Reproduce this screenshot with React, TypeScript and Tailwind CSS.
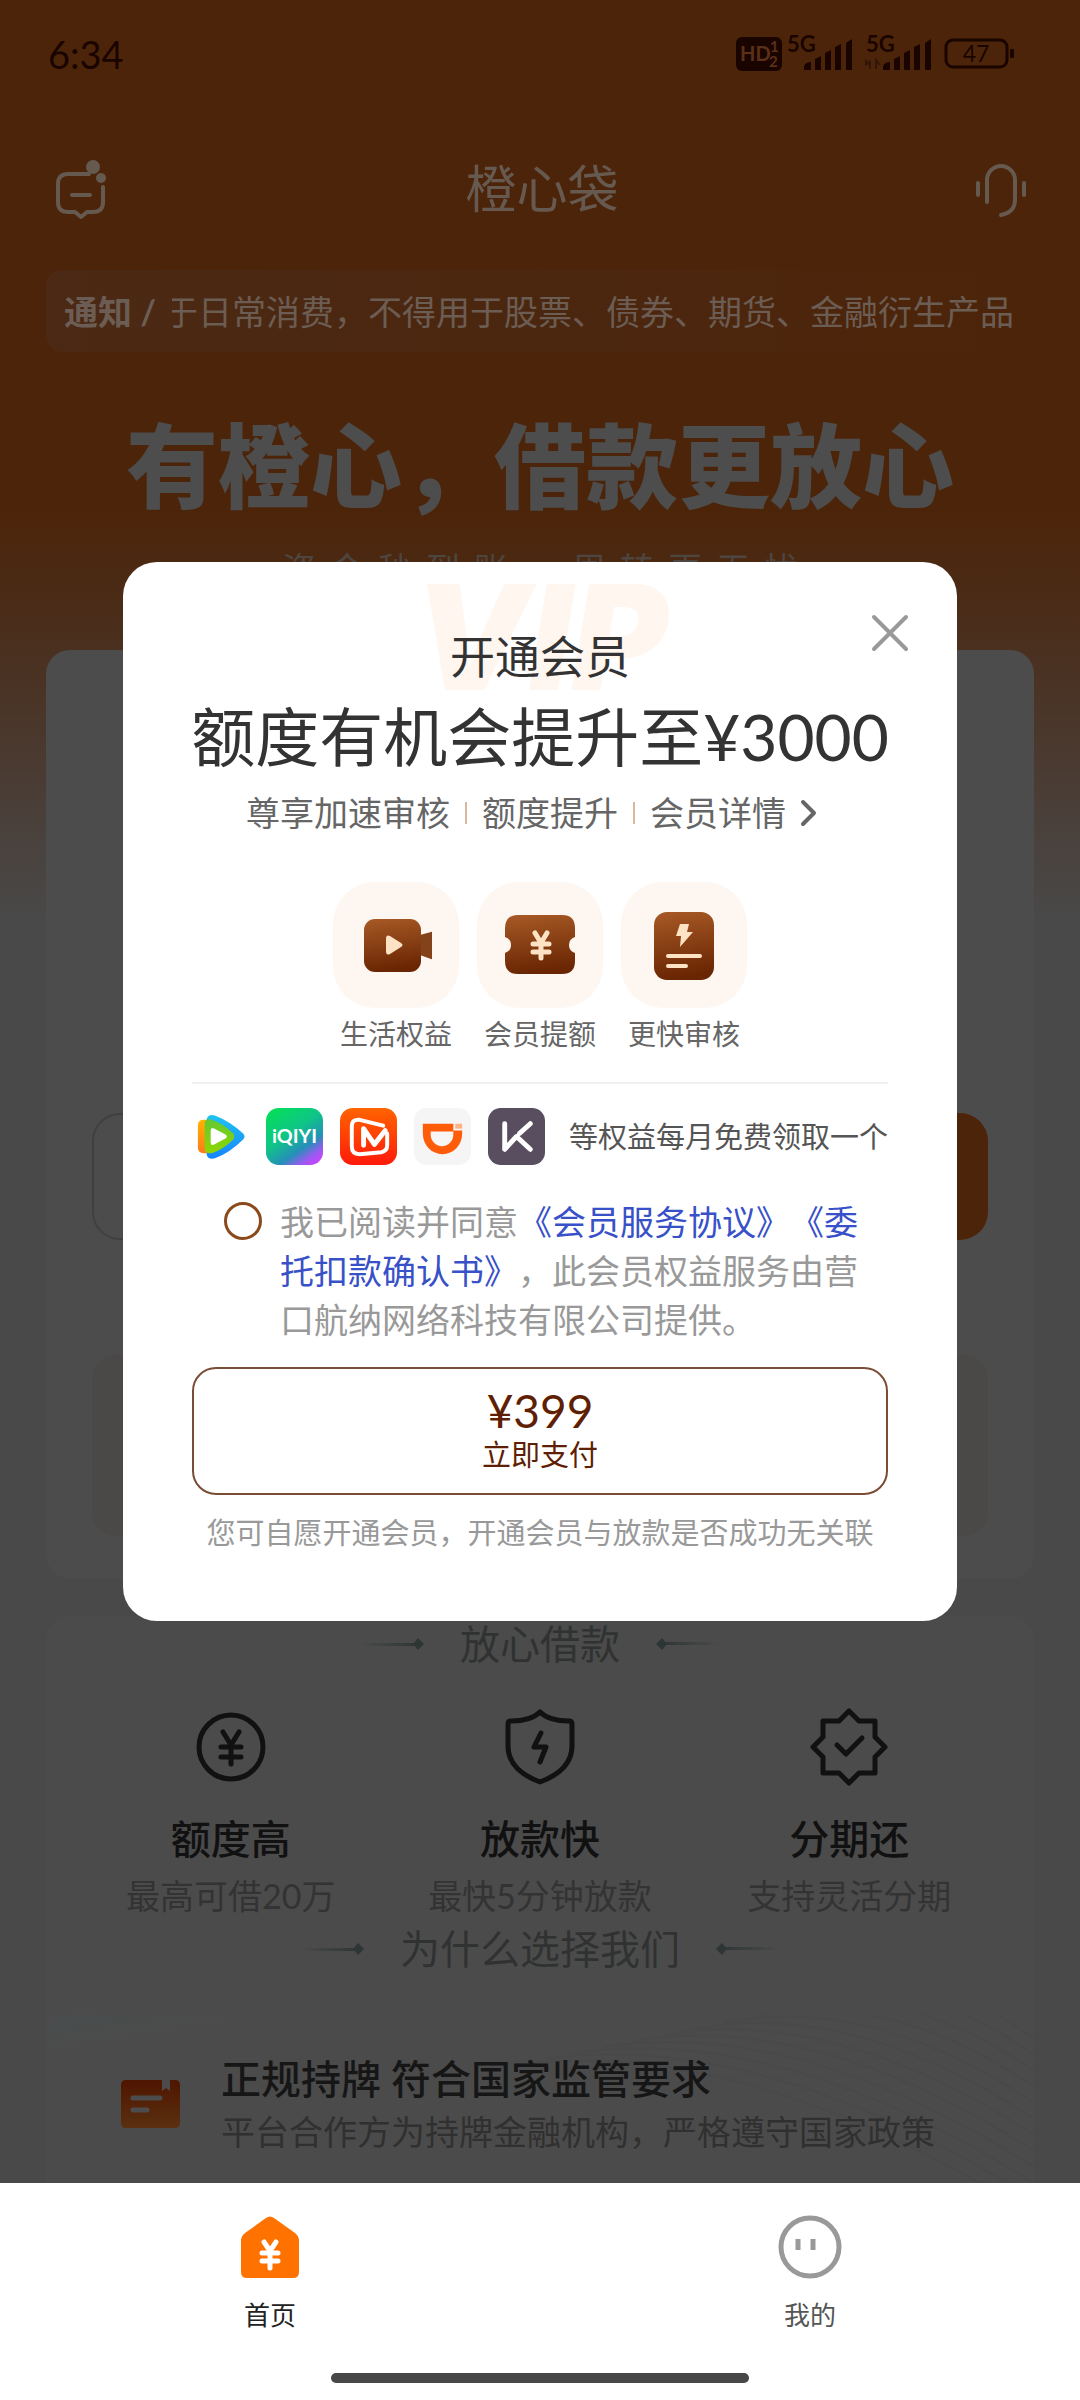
import type { ReactNode } from 'react';

const slogan = ['资金秒到账', '周转更无忧'];

const features = [
  { title: '额度高', text: '最高可借20万', icon: <YenCircleIcon /> },
  { title: '放款快', text: '最快5分钟放款', icon: <ShieldIcon /> },
  { title: '分期还', text: '支持灵活分期', icon: <BadgeIcon /> },
];

const benefits = [
  { label: '生活权益', icon: <CameraIcon /> },
  { label: '会员提额', icon: <CouponIcon /> },
  { label: '更快审核', icon: <FastReviewIcon /> },
];

/* Status bar */
function StatusIcons() {
  return (
    <svg width="280" height="44" viewBox="0 -4 280 44" fill="#1a0400" fontFamily="Lato, sans-serif" aria-hidden="true">
      <rect x="0" y="1" width="46" height="34" rx="6" />
      <text x="4" y="25" fontSize="20" fontWeight="700" fill="#5a3018">HD</text>
      <text x="34" y="16" fontSize="15" fontWeight="700" fill="#5a3018">1</text>
      <text x="33" y="31" fontSize="15" fontWeight="700" fill="#5a3018">2</text>
      {[0, 79].map((x) => (
        <g key={x} transform={`translate(${x} 0)`}>
          <text x="51" y="16" fontSize="22" fontWeight="700">5G</text>
          <path d="M68 34v-4q2-4 7-4v8zM79 34V23l6-3v14zM89 34V17l6-3v20zM99 34V11l6-3v26zM110 34V7l6-4v31z" />
        </g>
      ))}
      <path d="M130 30v-5l4 4M134 24v9M140 33v-9l4 5" fill="none" stroke="#33160a" strokeWidth="2" />
      <rect x="210" y="4" width="61" height="27" rx="7" fill="none" stroke="#1a0400" strokeWidth="3" />
      <rect x="274" y="13" width="4" height="9" rx="1" />
      <text x="240" y="26" fontSize="23" textAnchor="middle">47</text>
    </svg>
  );
}

function MessageIcon() {
  return (
    <svg width="56" height="62" viewBox="0 0 56 62" fill="none" stroke="#665950" strokeWidth="4" strokeLinecap="round" strokeLinejoin="round" aria-hidden="true">
      <path d="M35 16H14Q4 16 4 26v18q0 10 10 10h7l6 5 6-5h6q10 0 10-10V29" />
      <path d="M18 37h18" />
      <circle cx="39" cy="9" r="7" fill="#665950" stroke="none" />
      <circle cx="47" cy="20" r="5" fill="#665950" stroke="none" />
    </svg>
  );
}

function HeadsetIcon() {
  return (
    <svg width="54" height="58" viewBox="0 0 54 58" fill="none" stroke="#665950" strokeWidth="4" strokeLinecap="round" aria-hidden="true">
      <path d="M13 42V20a14 14 0 0 1 28 0v20q0 12-14 15" />
      <path d="M4 23v12M50 23v12" />
    </svg>
  );
}

/* Feature icons */
function YenCircleIcon() {
  return (
    <svg width="80" height="80" viewBox="0 0 80 80" fill="none" stroke="#111" strokeWidth="5" strokeLinecap="round" aria-hidden="true">
      <circle cx="40" cy="40" r="32" />
      <path d="M32 25l8 13 8-13M30 40h20M30 50h20M40 38v19" />
    </svg>
  );
}

function ShieldIcon() {
  return (
    <svg width="80" height="80" viewBox="0 0 80 80" fill="none" stroke="#111" strokeWidth="5" strokeLinecap="round" strokeLinejoin="round" aria-hidden="true">
      <path d="M40 5q9 9 29 9 3 0 3 3v22q0 24-32 36Q8 63 8 39V17q0-3 3-3 20 0 29-9z" />
      <path d="M41 26l-7 14h12l-6 15" />
    </svg>
  );
}

function BadgeIcon() {
  return (
    <svg width="80" height="80" viewBox="0 0 80 80" fill="none" stroke="#111" strokeWidth="5" strokeLinecap="round" strokeLinejoin="round" aria-hidden="true">
      <path d="M40 4l10 10h16v16l10 10-10 10v16H50L40 76 30 66H14V50L4 40l10-10V14h16z" />
      <path d="M28 38l9 9 16-16" />
    </svg>
  );
}

function LicenceIcon() {
  return (
    <svg width="60" height="48" viewBox="0 0 60 48" aria-hidden="true">
      <defs>
        <linearGradient id="licence" x1="0" y1="0" x2="0" y2="1">
          <stop offset="0" stopColor="#4f1500" />
          <stop offset="1" stopColor="#5a3010" />
        </linearGradient>
      </defs>
      <path d="M5 0h36v11l4-3 4 3V0h5q5 0 5 5v38q0 5-5 5H5q-5 0-5-5V5q0-5 5-5z" fill="url(#licence)" />
      <path d="M12 18h27M12 30h14" stroke="#4c4c4c" strokeWidth="5" strokeLinecap="round" />
    </svg>
  );
}

/* Member benefits */
function BrownGradient({ id }: { id: string }) {
  return (
    <linearGradient id={id} x1="0" y1="0" x2="0.15" y2="1">
      <stop offset="0" stopColor="#a85a26" />
      <stop offset="1" stopColor="#6a2603" />
    </linearGradient>
  );
}

function CameraIcon() {
  return (
    <svg width="72" height="72" viewBox="0 0 72 72" aria-hidden="true">
      <defs>
        <BrownGradient id="camera" />
      </defs>
      <path d="M60 26l11-3q4-1 4 2v22q0 4-4 3l-11-4z" fill="#84421a" />
      <rect x="4" y="10" width="57" height="53" rx="11" fill="url(#camera)" />
      <path d="M26 30v12q0 5 4 3l11-7q3-2 0-4l-11-7q-4-2-4 3z" fill="#fee2c4" />
    </svg>
  );
}

function CouponIcon() {
  return (
    <svg width="72" height="72" viewBox="0 0 72 72" aria-hidden="true">
      <defs>
        <BrownGradient id="coupon" />
      </defs>
      <path d="M14 6h44q13 0 13 13v9q-6 2-6 8t6 8v8q0 13-13 13H14Q1 65 1 52v-8q6-2 6-8t-6-8v-9Q1 6 14 6z" fill="url(#coupon)" />
      <path d="M31 24l6 10 6-10M29 35h16M29 43h16M37 34v15" fill="none" stroke="#fee2c4" strokeWidth="5" strokeLinecap="round" />
    </svg>
  );
}

function FastReviewIcon() {
  return (
    <svg width="72" height="72" viewBox="0 0 72 72" aria-hidden="true">
      <defs>
        <BrownGradient id="review" />
      </defs>
      <rect x="6" y="3" width="60" height="68" rx="13" fill="url(#review)" />
      <path d="M32 15h9l-2 8h6L32 38l1-11h-5z" fill="#fee2c4" />
      <path d="M20 47h32M20 57h18" stroke="#fee2c4" strokeWidth="4" strokeLinecap="round" />
    </svg>
  );
}

/* Partner logos */
function PartnerLogos() {
  return (
    <div className="flex shrink-0 gap-[17px]" aria-hidden="true">
      <svg width="57" height="57" viewBox="0 0 58 58">
        <defs>
          <linearGradient id="tencentBlue" x1="0" y1="0" x2="0" y2="1">
            <stop offset="0" stopColor="#1fc4f0" />
            <stop offset="1" stopColor="#1683ff" />
          </linearGradient>
          <linearGradient id="tencentOrange" x1="0" y1="0" x2="0" y2="1">
            <stop offset="0" stopColor="#ffb400" />
            <stop offset="1" stopColor="#ff7a1c" />
          </linearGradient>
          <linearGradient id="tencentGreen" x1="0" y1="0" x2="0" y2="1">
            <stop offset="0" stopColor="#63c932" />
            <stop offset="1" stopColor="#8ed600" />
          </linearGradient>
        </defs>
        <path d="M6 18q0-6 6-6h8v34h-8q-6 0-6-6z" fill="url(#tencentOrange)" />
        <path d="M15 11q2-6 9-3 15 6 28 18 3 3 0 6-13 13-28 19-7 2-9-3z" fill="url(#tencentBlue)" />
        <path d="M13 15q1-5 7-3 12 4 22 14 2 3 0 6-10 10-22 14-6 1-7-4z" fill="url(#tencentGreen)" />
        <path d="M19 23q0-4 4-2l11 6q3 2 0 4l-11 6q-4 2-4-2z" fill="#fff" />
      </svg>
      <svg width="57" height="57" viewBox="0 0 58 58">
        <defs>
          <linearGradient id="iqiyi" x1="0.2" y1="0" x2="0.9" y2="1">
            <stop offset="0" stopColor="#05dc5c" />
            <stop offset="0.4" stopColor="#0fc587" />
            <stop offset="0.68" stopColor="#2490b8" />
            <stop offset="0.85" stopColor="#9a5af0" />
            <stop offset="1" stopColor="#d040ff" />
          </linearGradient>
        </defs>
        <rect width="58" height="58" rx="13" fill="url(#iqiyi)" />
        <text x="29" y="36" fontSize="20" fontWeight="700" textAnchor="middle" fill="#fff" fontFamily="Lato, sans-serif">iQIYI</text>
      </svg>
      <svg width="57" height="57" viewBox="0 0 58 58" fill="none" stroke="#fff" strokeLinecap="round" strokeLinejoin="round">
        <defs>
          <linearGradient id="mango" x1="0" y1="0" x2="0" y2="1">
            <stop offset="0" stopColor="#ff6400" />
            <stop offset="1" stopColor="#ff1a0a" />
          </linearGradient>
        </defs>
        <rect width="58" height="58" rx="13" fill="url(#mango)" stroke="none" />
        <path d="M44 18L20 12q-8-1-8 7v20q0 8 8 8l22-2q6-1 6-7V26" strokeWidth="4" />
        <path d="M24 38V21l11 16 11-14" strokeWidth="5" />
      </svg>
      <svg width="57" height="57" viewBox="0 0 58 58">
        <rect width="58" height="58" rx="13" fill="#f5f5f5" />
        <path d="M9 16h31v7h9v3a20 21 0 0 1-40 0z" fill="#ff5c0a" />
        <path d="M17 24h23v3a11.500 12 0 0 1-23 0z" fill="#f8f6f5" />
        <path d="M42 16h7v5h-7z" fill="#ffb384" />
      </svg>
      <svg width="57" height="57" viewBox="0 0 58 58" fill="none" stroke="#fff" strokeWidth="5" strokeLinecap="round">
        <rect width="58" height="58" rx="13" fill="#584e60" stroke="none" />
        <path d="M17 16v26M43 16L32 26M17 42l12-13M29 29l14 13" />
      </svg>
    </div>
  );
}

/* Tab bar icons */
function HomeIcon() {
  return (
    <svg width="64" height="64" viewBox="0 0 64 64" aria-hidden="true">
      <path d="M28 3q4-3 8 0l21 15q4 3 4 8v31q0 6-6 6H9q-6 0-6-6V26q0-5 4-8z" fill="#ff7200" />
      <path d="M26 27l6 9 6-9M24 38h16M24 46h16M32 36v17" fill="none" stroke="#fff" strokeWidth="5" strokeLinecap="round" />
    </svg>
  );
}

function MineIcon() {
  return (
    <svg width="64" height="64" viewBox="0 0 64 64" fill="none" stroke="#999" strokeWidth="5" aria-hidden="true">
      <circle cx="32" cy="32" r="29" />
      <path d="M20 24v11M35 24v11" />
    </svg>
  );
}

function Ornament({ flip = false }: { flip?: boolean }) {
  return (
    <svg className={flip ? 'rotate-180' : ''} width="64" height="12" viewBox="0 0 64 12" aria-hidden="true">
      <defs>
        <linearGradient id="fade" x1="0" x2="1">
          <stop offset="0" stopColor="#2e3535" stopOpacity="0" />
          <stop offset="1" stopColor="#2e3535" />
        </linearGradient>
      </defs>
      <rect y="5" width="60" height="3" fill="url(#fade)" />
      <path d="M53 6l5-6 6 6-6 6z" fill="#2e3535" />
    </svg>
  );
}

function SectionTitle({ children }: { children: ReactNode }) {
  return (
    <div className="flex items-center justify-center gap-9">
      <Ornament />
      <h2 className="text-[40px] leading-14 text-[#303232]">{children}</h2>
      <Ornament flip />
    </div>
  );
}

function MemberDialog() {
  return (
    <div className="absolute inset-0 flex items-center justify-center px-[123px]">
      <section role="dialog" aria-label="开通会员" className="relative w-full rounded-[34px] bg-white px-[69px] pt-[65px] pb-[68px]">
        <p className="absolute inset-x-0 top-0 text-center font-[Inter,sans-serif] text-[146px] leading-[150px] font-black text-[#fff6f0] italic" aria-hidden="true">VIP</p>
        <button className="absolute top-12 right-11 p-1" aria-label="关闭">
          <svg width="38" height="38" viewBox="0 0 38 38" stroke="#999" strokeWidth="4" strokeLinecap="round">
            <path d="M3 3l32 32M35 3L3 35" />
          </svg>
        </button>

        <div className="relative flex flex-col items-center whitespace-nowrap">
          <h2 className="text-[45px] leading-[60px] text-[#333]">开通会员</h2>
          <p className="text-[64px] leading-[100px] text-[#333]">额度有机会提升至¥3000</p>
          <div className="flex items-center gap-[15px] text-[34px] leading-[52px] text-[#666]">
            <span>尊享加速审核</span>
            <span className="h-[22px] w-[2px] bg-[#dbb79c]" />
            <span>额度提升</span>
            <span className="h-[22px] w-[2px] bg-[#dbb79c]" />
            <a href="#member" className="flex items-center">
              会员详情
              <svg width="48" height="30" viewBox="0 0 48 30" fill="none" stroke="#666" strokeWidth="4" strokeLinecap="round" strokeLinejoin="round" aria-hidden="true">
                <path d="M17 4l11 11-11 11" />
              </svg>
            </a>
          </div>
        </div>

        <ul className="relative mt-[43px] flex justify-center gap-[18px]">
          {benefits.map((b) => (
            <li key={b.label} className="text-center">
              <div className="flex size-[126px] items-center justify-center rounded-[42px] bg-[#fef6f0]">{b.icon}</div>
              <p className="mt-1.5 text-[28px] leading-10 text-[#666]">{b.label}</p>
            </li>
          ))}
        </ul>

        <div className="mt-7 flex items-center justify-between border-t-2 border-[#f0f0f0] pt-6 whitespace-nowrap">
          <PartnerLogos />
          <p className="text-[29px] leading-10 text-[#555]">等权益每月免费领取一个</p>
        </div>

        <div className="mt-8 flex gap-[18px] pr-3 pl-8">
          <input id="agree" type="checkbox" className="mt-[5px] size-[38px] shrink-0 appearance-none rounded-full border-3 border-[#8a4a1c] checked:bg-[#8a4a1c]" />
          <label htmlFor="agree" className="text-[34px] leading-[49px] text-[#999] [text-spacing-trim:space-all]">
            我已阅读并同意
            <a href="#service" className="text-[#3850c8]">《会员服务协议》</a>
            <a href="#deduct" className="text-[#3850c8]">《委托扣款确认书》</a>
            ，此会员权益服务由营口航纳网络科技有限公司提供。
          </label>
        </div>

        <button className="mt-[23px] flex h-32 w-full flex-col items-center justify-center rounded-3xl border-2 border-[#7c4d36] text-[#5f1f04]">
          <span className="text-[46px] leading-12">¥399</span>
          <span className="text-[29px] leading-10">立即支付</span>
        </button>
        <p className="mt-[18px] text-center text-[29px] leading-10 whitespace-nowrap text-[#999]">您可自愿开通会员，开通会员与放款是否成功无关联</p>
      </section>
    </div>
  );
}

export default function App() {
  return (
    <div lang="zh-CN" className="flex h-screen flex-col bg-white font-[Lato,'Noto_Sans_CJK_SC',sans-serif]">
      <main className="relative flex-1 overflow-hidden bg-[#494949] bg-[linear-gradient(180deg,#4c2409_0,#4c2409_510px,#4a2d1a_620px,#4a3c34_780px,#494949_920px)]">
        <div className="flex h-[108px] items-center justify-between pr-16 pl-12">
          <span className="text-[38px] text-[#1a0400]">6:34</span>
          <StatusIcons />
        </div>

        <header className="flex h-[162px] items-center justify-between pr-[52px] pl-[54px]">
          <button aria-label="消息"><MessageIcon /></button>
          <h1 className="text-[51px] text-[#665950]">橙心袋</h1>
          <button aria-label="客服"><HeadsetIcon /></button>
        </header>

        <div className="mx-[46px] flex h-[82px] items-center rounded-2xl bg-linear-to-r from-[#4b2914] to-[#4c2409] pr-5 pl-[18px] text-[34px] whitespace-nowrap text-[#6b5d53]">
          <strong className="shrink-0">通知 /</strong>
          <div className="ml-4 flex flex-1 justify-end overflow-hidden">
            <span>于日常消费，不得用于股票、债券、期货、金融衍生产品</span>
          </div>
        </div>

        <p className="mt-[54px] text-center text-[92px] leading-[120px] font-black text-[#4d4d4d]">有橙心，借款更放心</p>
        <p className="mt-[18px] flex justify-center gap-16 text-[34px] leading-[50px] text-[#4d4540]">
          {slogan.map((part) => (
            <span key={part} className="flex gap-3.5">
              {[...part].map((char) => (
                <span key={char}>{char}</span>
              ))}
            </span>
          ))}
        </p>

        {/* Loan card */}
        <div className="mx-[46px] mt-14 rounded-3xl bg-[#4c4c4c] px-[46px] pt-[463px] pb-[43px]">
          <div className="grid grid-cols-2 gap-6">
            <div className="h-[127px] rounded-[28px] border-2 border-[#404040]" />
            <div className="h-[127px] rounded-[28px] bg-[#4c2409]" />
          </div>
          <div className="mt-[115px] h-[181px] rounded-3xl bg-[#4b4947]" />
        </div>

        <div className="mx-[46px] mt-[37px] rounded-t-3xl bg-[#4b4b4b]">
          <SectionTitle>放心借款</SectionTitle>
          <ul className="mt-[35px] grid grid-cols-3 px-[30px] text-center">
            {features.map((f) => (
              <li key={f.title} className="flex flex-col items-center">
                {f.icon}
                <h3 className="mt-6 text-[40px] leading-14 font-medium text-[#111]">{f.title}</h3>
                <p className="mt-1 text-[34px] leading-[50px] text-[#333]">{f.text}</p>
              </li>
            ))}
          </ul>

          <SectionTitle>为什么选择我们</SectionTitle>
          <div className="relative mt-[38px] flex items-center gap-10 overflow-hidden rounded-3xl bg-linear-to-br from-[#484d4d] via-[#4b4b4b] via-10% to-[#4b4b4b] py-9 pl-[75px]">
            <svg className="absolute top-0 right-0" width="520" height="240" viewBox="0 0 520 240" fill="none" stroke="#494949" strokeWidth="2" aria-hidden="true">
              {Array.from({ length: 14 }, (_, i) => (
                <path key={i} d={`M${i * 30} ${50 - i * 6}Q${230 + i * 18} ${20 - i * 6} 520 ${200 - i * 16}`} />
              ))}
            </svg>
            <LicenceIcon />
            <div className="relative whitespace-nowrap">
              <h3 className="text-[40px] leading-14 font-medium text-[#161616]">正规持牌 符合国家监管要求</h3>
              <p className="text-[34px] leading-[50px] text-[#303030]">平台合作方为持牌金融机构，严格遵守国家政策</p>
            </div>
          </div>
        </div>

        <MemberDialog />
      </main>

      <nav className="pt-8 pb-[17px]">
        <div className="grid grid-cols-2 text-[26px] leading-10">
          <a href="#home" className="flex flex-col items-center gap-4 text-[#222]">
            <HomeIcon />
            首页
          </a>
          <a href="#mine" className="flex flex-col items-center gap-4 text-[#555]">
            <MineIcon />
            我的
          </a>
        </div>
        <div className="mx-auto mt-[38px] h-2.5 w-[418px] rounded-full bg-[#484848]" />
      </nav>
    </div>
  );
}
